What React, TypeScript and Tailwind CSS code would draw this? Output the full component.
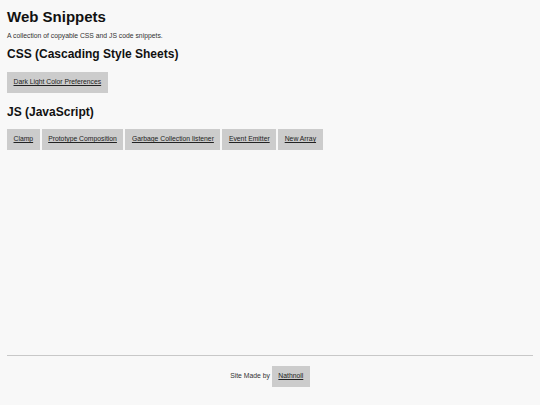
const cssSnippets = ["Dark Light Color Preferences"];
const jsSnippets = [
  "Clamp",
  "Prototype Composition",
  "Garbage Collection listener",
  "Event Emitter",
  "New Array",
];

function SnippetButton({ label }: { label: string }) {
  return (
    <a
      href="#"
      className="flex h-[21px] items-center bg-[#cccccc] px-[6.5px] text-[6.8px] text-[#222222] underline"
    >
      {label}
    </a>
  );
}

export default function App() {
  return (
    <div
      className="flex min-h-screen flex-col bg-[#f8f8f8] px-[7px] text-[#111111]"
      style={{ fontFamily: '"Liberation Sans", Arial, sans-serif' }}
    >
      <main className="flex-1">
        <h1 className="mt-[8px] text-[15px] font-bold leading-[17px]">Web Snippets</h1>
        <p className="mt-[7px] text-[6.8px] leading-[8px] text-[#333333]">
          A collection of copyable CSS and JS code snippets.
        </p>

        <h2 className="mt-[7px] text-[12px] font-bold leading-[14px]">CSS (Cascading Style Sheets)</h2>
        <div className="mt-[11px] flex gap-[2.5px]">
          {cssSnippets.map((s) => (
            <SnippetButton key={s} label={s} />
          ))}
        </div>

        <h2 className="mt-[12px] text-[12px] font-bold leading-[14px]">JS (JavaScript)</h2>
        <div className="mt-[10px] flex gap-[2px]">
          {jsSnippets.map((s) => (
            <SnippetButton key={s} label={s} />
          ))}
        </div>
      </main>

      <footer className="mb-[18px] border-t border-[#c8c8c8] pt-[10px]">
        <div className="flex items-center justify-center gap-[2px] text-[6.8px] text-[#333333]">
          <span>Site Made by</span>
          <SnippetButton label="Nathnoll" />
        </div>
      </footer>
    </div>
  );
}
